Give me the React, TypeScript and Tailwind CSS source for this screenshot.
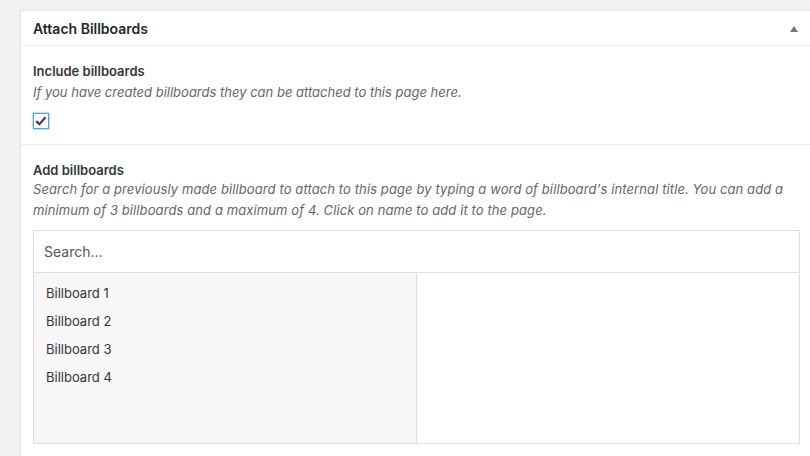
import React, { useState } from 'react';

const billboards = ['Billboard 1', 'Billboard 2', 'Billboard 3', 'Billboard 4'];

const App = () => {
    const [included, setIncluded] = useState(true);
    const [query, setQuery] = useState('');

    return (
        <div
            className="h-[456px] w-[810px] overflow-hidden bg-[#f1f1f1] pt-[10px] pl-[20px]"
            style={{ fontFamily: 'Inter, "Noto Sans", sans-serif' }}
        >
            <div className="w-[792px] border border-[#e5e5e5] bg-white shadow-[0_1px_1px_rgba(0,0,0,0.04)]">
                {/* Header */}
                <div className="flex h-[35px] items-center justify-between border-b border-[#eeeeee] pl-[12px] pr-[12px] pt-[1px]">
                    <h2 className="text-[14px] font-semibold leading-none text-[#23282d]">Attach Billboards</h2>
                    <span className="mr-[1px] mt-[1px] h-0 w-0 border-x-[4px] border-b-[6px] border-x-transparent border-b-[#72777c]" />
                </div>

                {/* Include */}
                <div className="border-b border-[#eeeeee] px-[12px] pt-[16px] pb-[15px]">
                    <p className="text-[13px] font-semibold leading-[18px] text-[#32373c]">Include billboards</p>
                    <p className="mt-[3px] text-[13px] italic leading-[18px] text-[#666]">
                        If you have created billboards they can be attached to this page here.
                    </p>
                    <button
                        onClick={() => setIncluded(!included)}
                        className="mt-[12px] flex h-[16px] w-[16px] items-center justify-center border border-[#5b9dd9] bg-white shadow-[0_0_2px_rgba(30,140,190,0.8)]"
                    >
                        {included && (
                            <svg viewBox="0 0 16 16" className="h-[14px] w-[14px]">
                                <path d="M2.5 8.2 L6.2 11.6 L13.2 3.8" fill="none" stroke="#4c3a6b" strokeWidth="2.6" strokeLinejoin="miter" />
                            </svg>
                        )}
                    </button>
                </div>

                {/* Add */}
                <div className="px-[12px] pt-[16px] pb-[12px]">
                    <p className="text-[13px] font-semibold leading-[18px] text-[#32373c]">Add billboards</p>
                    <p className="text-[13px] italic leading-[21px] text-[#666] tracking-[0.1px]">
                        Search for a previously made billboard to attach to this page by typing a word of billboard's internal title. You can add a minimum of 3 billboards and a maximum of 4. Click on name to add it to the page.
                    </p>
                    <div className="mt-[9px] w-[767px] border border-[#dddddd]">
                        <input
                            value={query}
                            onChange={(e) => setQuery(e.target.value)}
                            placeholder="Search..."
                            className="block h-[42px] w-full border-b border-[#dddddd] px-[10px] text-[14px] text-[#32373c] outline-none placeholder:text-[#555]"
                        />
                        <div className="grid h-[170px] grid-cols-2">
                            <ul className="border-r border-[#dddddd] bg-[#f7f7f7] pt-[9px]">
                                {billboards
                                    .filter((b) => b.toLowerCase().includes(query.toLowerCase()))
                                    .map((b) => (
                                        <li key={b} className="h-[28px] px-[12px] text-[13px] leading-[22px] text-[#32373c]">
                                            {b}
                                        </li>
                                    ))}
                            </ul>
                            <ul className="bg-white" />
                        </div>
                    </div>
                </div>
            </div>
        </div>
    );
};

export default App;
